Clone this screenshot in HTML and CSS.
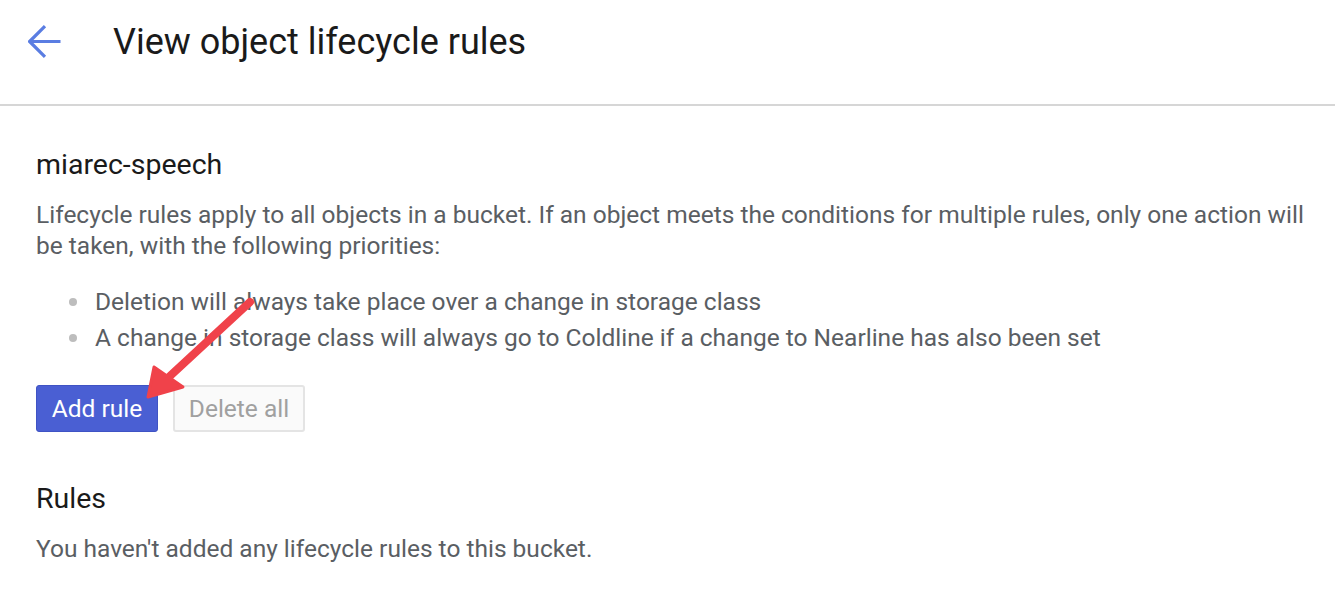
FILE: index.html
```html
<!DOCTYPE html>
<html lang="en">
<head>
<meta charset="utf-8">
<title>View object lifecycle rules</title>
<link rel="stylesheet" href="styles.css">
</head>
<body>
<header class="topbar">
  <svg class="back" width="34" height="34" viewBox="0 0 34 34" aria-hidden="true">
    <path d="M17 1.2 L1.6 16.5 L17 31.8 M1.6 16.5 H32.5" fill="none" stroke="#5a7de2" stroke-width="3.2"/>
  </svg>
  <h1 class="title">View object lifecycle rules</h1>
</header>
<main class="content">
  <h2 class="bucket">miarec-speech</h2>
  <p class="text">Lifecycle rules apply to all objects in a bucket. If an object meets the conditions for multiple rules, only one action will be taken, with the following priorities:</p>
  <ul class="list">
    <li>Deletion will always take place over a change in storage class</li>
    <li>A change in storage class will always go to Coldline if a change to Nearline has also been set</li>
  </ul>
  <div class="actions">
    <button class="btn primary">Add rule</button>
    <button class="btn disabled">Delete all</button>
  </div>
  <h2 class="section">Rules</h2>
  <p class="text">You haven't added any lifecycle rules to this bucket.</p>
  <svg class="callout" width="130" height="120" viewBox="0 0 130 120" aria-hidden="true">
    <path d="M110 12 L30 86" stroke="#f0424a" stroke-width="8" stroke-linecap="round" fill="none"/>
    <path d="M8 107 L14 77 L43 97 Z" fill="#f0424a" stroke="#f0424a" stroke-width="3" stroke-linejoin="round"/>
  </svg>
</main>
</body>
</html>
```

FILE: styles.css
```css
html, body {
  margin: 0;
  padding: 0;
  background: #ffffff;
  font-family: Roboto, "Liberation Sans", Arial, sans-serif;
}

.topbar {
  display: flex;
  align-items: center;
  height: 84px;
  padding-bottom: 20px;
  border-bottom: 2px solid #d6d6d6;
}

.back {
  margin-left: 28px;
  flex: none;
}

.title {
  margin: 0 0 0 51px;
  font-size: 36px;
  font-weight: 400;
  color: #1a1a1a;
  line-height: 42px;
}

.content {
  position: relative;
  padding: 0 16px 0 36px;
}

.bucket,
.section {
  margin: 0;
  font-size: 28.5px;
  font-weight: 400;
  line-height: 32px;
  color: #1a1a1a;
}

.bucket {
  padding-top: 43px;
}

.section {
  margin-top: 51px;
}

.text {
  margin: 18px 0 0;
  font-size: 24.5px;
  line-height: 31px;
  color: #5a5e63;
}

.list {
  margin: 23px 0 0;
  padding: 0 0 0 59px;
  font-size: 24.5px;
  line-height: 36px;
  color: #5a5e63;
}

.list li {
  list-style: none;
  position: relative;
}

.list li::before {
  content: "";
  position: absolute;
  left: -26px;
  top: 14px;
  width: 8px;
  height: 8px;
  border-radius: 50%;
  background: #bdbdbd;
}

.actions {
  display: flex;
  gap: 15px;
  margin-top: 29px;
}

.btn {
  height: 47px;
  padding: 0;
  font-family: Roboto, "Liberation Sans", Arial, sans-serif;
  font-size: 24.5px;
  border-radius: 3px;
}

.primary {
  background: #4a5fd3;
  border: 1px solid #3f53c4;
  color: #ffffff;
  width: 122px;
}

.disabled {
  background: #fafafa;
  border: 2px solid #e4e4e4;
  color: #a0a0a0;
  width: 132px;
}

.callout {
  position: absolute;
  left: 140px;
  top: 184px;
}
```
